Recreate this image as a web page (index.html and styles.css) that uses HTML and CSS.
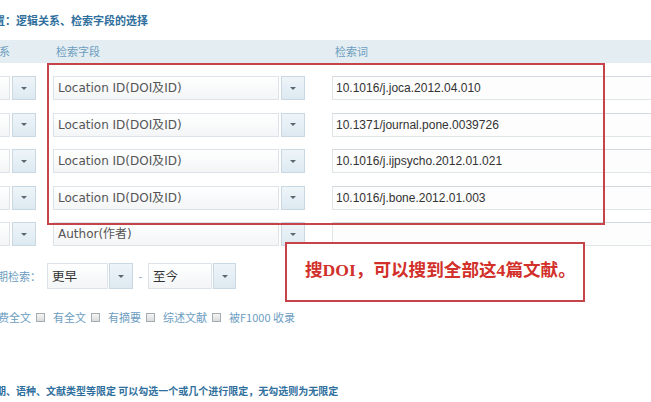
FILE: index.html
```html
<!DOCTYPE html>
<html lang="zh-CN">
<head>
<meta charset="utf-8">
<title>检索框设置</title>
<link rel="stylesheet" href="styles.css">
</head>
<body>
<div class="page">
  <div class="title">检索框设置：逻辑关系、检索字段的选择</div>

  <div class="head-band">
    <div class="c1 hlabel">逻辑关系</div>
    <div class="c2 hlabel">检索字段</div>
    <div class="c3 hlabel">检索词</div>
  </div>

  <div class="rows">
    <div class="row">
      <div class="c1 sel"><div class="box"></div><div class="btn"></div></div>
      <div class="c2 sel"><div class="box">Location ID(DOI及ID)</div><div class="btn"></div></div>
      <div class="c3"><div class="term">10.1016/j.joca.2012.04.010</div></div>
    </div>
    <div class="row">
      <div class="c1 sel"><div class="box"></div><div class="btn"></div></div>
      <div class="c2 sel"><div class="box">Location ID(DOI及ID)</div><div class="btn"></div></div>
      <div class="c3"><div class="term">10.1371/journal.pone.0039726</div></div>
    </div>
    <div class="row">
      <div class="c1 sel"><div class="box"></div><div class="btn"></div></div>
      <div class="c2 sel"><div class="box">Location ID(DOI及ID)</div><div class="btn"></div></div>
      <div class="c3"><div class="term">10.1016/j.ijpsycho.2012.01.021</div></div>
    </div>
    <div class="row">
      <div class="c1 sel"><div class="box"></div><div class="btn"></div></div>
      <div class="c2 sel"><div class="box">Location ID(DOI及ID)</div><div class="btn"></div></div>
      <div class="c3"><div class="term">10.1016/j.bone.2012.01.003</div></div>
    </div>
    <div class="row">
      <div class="c1 sel"><div class="box"></div><div class="btn"></div></div>
      <div class="c2 sel"><div class="box">Author(作者)</div><div class="btn"></div></div>
      <div class="c3"><div class="term"></div></div>
    </div>
  </div>

  <div class="date-row">
    <div class="date-label">出版日期检索：</div>
    <div class="sel dsel1"><div class="box dbox">更早</div><div class="btn"></div></div>
    <div class="dash">-</div>
    <div class="sel dsel2"><div class="box dbox">至今</div><div class="btn"></div></div>
  </div>

  <div class="checks">
    <span class="clabel">免费全文</span>
    <span class="cb"></span><span class="clabel">有全文</span>
    <span class="cb"></span><span class="clabel">有摘要</span>
    <span class="cb"></span><span class="clabel">综述文献</span>
    <span class="cb"></span><span class="clabel">被F1000 收录</span>
  </div>

  <div class="note">出版日期、语种、文献类型等限定 可以勾选一个或几个进行限定，无勾选则为无限定</div>

  <div class="redbox redbox-fields"></div>
  <div class="redbox redbox-callout"><span class="callout-text">搜DOI，可以搜到全部这4篇文献。</span></div>
</div>
</body>
</html>
```

FILE: styles.css
```css
html, body {
  margin: 0;
  padding: 0;
  background: #ffffff;
  overflow: hidden;
}

body {
  width: 651px;
  height: 402px;
  font-family: "Noto Sans CJK SC", "DejaVu Sans", sans-serif;
}

.page {
  position: relative;
  margin-left: -37px;
  width: 760px;
}

.title {
  height: 27px;
  padding-top: 13px;
  margin-left: -13px;
  font-size: 11px;
  line-height: 14px;
  font-weight: bold;
  color: #2f6f9d;
  white-space: nowrap;
}

.head-band {
  display: flex;
  height: 23px;
  background: #e3edf2;
}

.hlabel {
  padding-left: 3px;
  font-size: 11px;
  line-height: 23px;
  color: #6c9dbf;
  box-sizing: border-box;
}

.c1 { width: 73px; margin-right: 17px; flex: none; }
.c2 { width: 252px; margin-right: 27px; flex: none; }
.c3 { flex: 1; }

.rows {
  display: flex;
  flex-direction: column;
  gap: 12.5px;
  padding-top: 13px;
}

.row {
  display: flex;
  height: 24px;
}

.sel {
  display: flex;
  gap: 2px;
  height: 24px;
}

.box {
  flex: 1;
  box-sizing: border-box;
  border: 1px solid #dde3e8;
  background: linear-gradient(#ffffff, #f3f5f6);
  padding-left: 4px;
  font-family: "DejaVu Sans", sans-serif;
  font-size: 12px;
  line-height: 22px;
  color: #555555;
  white-space: nowrap;
  overflow: hidden;
}

.btn {
  width: 24px;
  flex: none;
  box-sizing: border-box;
  border: 1px solid #c9d8e3;
  background: linear-gradient(#eef5f9, #dde9f1);
  display: flex;
  align-items: center;
  justify-content: center;
}

.btn::after {
  content: "";
  width: 0;
  height: 0;
  border-left: 3px solid transparent;
  border-right: 3px solid transparent;
  border-top: 3px solid #5b6770;
}

.term {
  height: 24px;
  box-sizing: border-box;
  border: 1px solid #e0e5e8;
  border-top-color: #d3d9de;
  background: #fdfdfd;
  padding-left: 3px;
  font-family: "Liberation Sans", Arial, sans-serif;
  font-size: 12px;
  line-height: 22px;
  color: #333333;
  white-space: nowrap;
}

.date-row {
  display: flex;
  align-items: center;
  margin-top: 17px;
  height: 26px;
}

.date-label {
  width: 84px;
  flex: none;
  box-sizing: border-box;
  padding-right: 6px;
  display: flex;
  justify-content: flex-end;
  font-size: 11px;
  color: #6c9dbf;
  white-space: nowrap;
}

.sel.dsel1, .sel.dsel2 {
  height: 26px;
  gap: 1px;
}

.dsel1 .box { width: 61px; flex: none; }
.dsel2 .box { width: 64px; flex: none; }
.dsel2 .btn { width: 23px; }

.dbox {
  font-family: "Noto Sans CJK SC", sans-serif;
  font-size: 12.5px;
  line-height: 24px;
  color: #333333;
  padding-left: 4px;
}

.dash {
  width: 15px;
  text-align: center;
  font-size: 11px;
  color: #7a9cb6;
}

.checks {
  display: flex;
  align-items: center;
  margin-top: 21px;
  padding-left: 24px;
  height: 14px;
}

.clabel {
  font-size: 11px;
  line-height: 14px;
  color: #6c9dbf;
  margin-right: 5px;
  white-space: nowrap;
}

.cb {
  width: 9px;
  height: 9px;
  box-sizing: border-box;
  border: 1px solid #a3adb4;
  background: linear-gradient(#f4f4f4, #dcdcdc);
  margin-right: 8px;
}

.note {
  margin-top: 60px;
  margin-left: 3px;
  font-size: 10px;
  line-height: 14px;
  font-weight: bold;
  color: #2f6f9d;
  white-space: nowrap;
}

.redbox {
  position: absolute;
  box-sizing: border-box;
  border: 2px solid #c6434a;
}

.redbox-fields {
  left: 84px;
  top: 63px;
  width: 558px;
  height: 162px;
}

.redbox-callout {
  left: 322px;
  top: 242px;
  width: 300px;
  height: 60px;
  background: #ffffff;
  display: flex;
  align-items: center;
  padding-left: 18px;
  padding-bottom: 7px;
}

.callout-text {
  font-family: "Liberation Serif", "Noto Sans CJK SC", serif;
  font-size: 17.6px;
  font-weight: bold;
  color: #d2302a;
  white-space: nowrap;
}
```
